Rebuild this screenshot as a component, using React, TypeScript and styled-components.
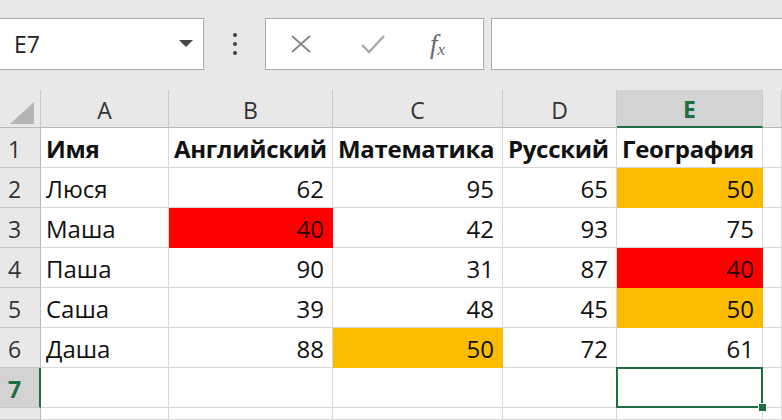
import React from "react";
import styled, { createGlobalStyle, css } from "styled-components";

const Global = createGlobalStyle`
  html, body { margin: 0; padding: 0; background: #ffffff; overflow: hidden; }
  body { font-family: "Open Sans", "Noto Sans", sans-serif; }
`;

const FONT = `"Open Sans", "Noto Sans", sans-serif`;
const GREEN = "#1e6e42";

const Page = styled.div`
  width: 782px;
  height: 420px;
  display: flex;
  flex-direction: column;
  background: #ffffff;
  overflow: hidden;
`;

const Toolbar = styled.div`
  height: 90px;
  box-sizing: border-box;
  background: #e8e8e8;
  display: flex;
  align-items: flex-start;
  padding-top: 18px;
  flex-shrink: 0;
`;

const NameBox = styled.div`
  width: 204px;
  height: 52px;
  box-sizing: border-box;
  background: #ffffff;
  border: 1px solid #aaaaaa;
  border-left: none;
  display: flex;
  align-items: center;
  justify-content: space-between;
  padding: 0 10px 0 14px;
  font-family: ${FONT};
  font-size: 23px;
  color: #222;
`;

const Dots = styled.div`
  width: 61px;
  height: 52px;
  display: flex;
  flex-direction: column;
  align-items: center;
  justify-content: center;
  gap: 5px;
  span {
    width: 4px;
    height: 4px;
    border-radius: 50%;
    background: #444;
  }
`;

const FxGroup = styled.div`
  width: 219px;
  height: 52px;
  box-sizing: border-box;
  background: #ffffff;
  border: 1px solid #aaaaaa;
  display: flex;
  align-items: center;
  padding-left: 24px;
  gap: 48px;
`;

const FxLabel = styled.span`
  font-family: "Liberation Serif", "DejaVu Serif", serif;
  font-style: italic;
  font-size: 27px;
  color: #6a6a6a;
  margin-left: -4px;
  line-height: 1;
  sub {
    font-size: 17px;
    vertical-align: -2px;
  }
`;

const FormulaInput = styled.div`
  flex: 1;
  height: 52px;
  margin-left: 7px;
  box-sizing: border-box;
  background: #ffffff;
  border: 1px solid #aaaaaa;
  border-right: none;
`;

const Sheet = styled.div`
  flex: 1;
  display: grid;
  grid-template-columns: 41px 128px 164px 170px 114px 146px 1fr;
  grid-template-rows: 38px repeat(7, 40px) 1fr;
  background: #ffffff;
`;

const Corner = styled.div`
  background: #e8e8e8;
  border-right: 1px solid #c8c8c8;
  border-bottom: 1px solid #b8b8b8;
  box-sizing: border-box;
  display: flex;
  align-items: flex-end;
  justify-content: flex-end;
  padding: 0 6px 3px 0;
`;

const ColHeader = styled.div<{ $sel?: boolean }>`
  box-sizing: border-box;
  background: ${(p) => (p.$sel ? "#d3d3d3" : "#e8e8e8")};
  border-right: 1px solid #c8c8c8;
  border-bottom: ${(p) => (p.$sel ? `2px solid ${GREEN}` : "1px solid #b8b8b8")};
  display: flex;
  align-items: center;
  justify-content: center;
  font-family: ${FONT};
  font-size: 23px;
  padding-top: 2px;
  color: ${(p) => (p.$sel ? GREEN : "#333")};
  font-weight: ${(p) => (p.$sel ? 700 : 400)};
`;

const RowHeader = styled.div<{ $sel?: boolean }>`
  box-sizing: border-box;
  background: ${(p) => (p.$sel ? "#d3d3d3" : "#e8e8e8")};
  border-right: ${(p) => (p.$sel ? `2px solid ${GREEN}` : "1px solid #b8b8b8")};
  border-bottom: 1px solid #c8c8c8;
  display: flex;
  align-items: flex-end;
  padding: 0 0 2px 8px;
  font-family: ${FONT};
  font-size: 23px;
  color: ${(p) => (p.$sel ? GREEN : "#333")};
  font-weight: ${(p) => (p.$sel ? 700 : 400)};
`;

const Cell = styled.div<{ $fill?: string; $num?: boolean; $bold?: boolean; $sel?: boolean }>`
  position: relative;
  box-sizing: border-box;
  background: ${(p) => p.$fill ?? "#ffffff"};
  border-right: 1px solid ${(p) => (p.$fill ? p.$fill : "#d8d8d8")};
  border-bottom: 1px solid ${(p) => (p.$fill ? p.$fill : "#d8d8d8")};
  display: flex;
  align-items: flex-end;
  justify-content: ${(p) => (p.$num ? "flex-end" : "flex-start")};
  padding: 0 ${(p) => (p.$num ? "8px" : "2px")} 2px 5px;
  font-family: ${FONT};
  font-size: 24px;
  font-weight: ${(p) => (p.$bold ? 700 : 400)};
  letter-spacing: ${(p) => (p.$bold ? "-0.3px" : "0")};
  color: ${(p) => (p.$fill === "#ff0000" ? "#2a0000" : "#111")};
  white-space: nowrap;
  overflow: visible;
  ${(p) =>
    p.$sel &&
    css`
      &::after {
        content: "";
        position: absolute;
        left: -1px;
        top: -1px;
        right: -1px;
        bottom: -1px;
        border: 2px solid ${GREEN};
        pointer-events: none;
      }
      &::before {
        content: "";
        position: absolute;
        right: -5px;
        bottom: -5px;
        width: 7px;
        height: 7px;
        background: ${GREEN};
        border: 1px solid #ffffff;
        z-index: 2;
      }
    `}
`;

type C = { v: string; fill?: string };

const ORANGE = "#fbbc00";
const RED = "#ff0000";

const headers = ["Имя", "Английский", "Математика", "Русский", "География"];
const rows: C[][] = [
  [{ v: "Люся" }, { v: "62" }, { v: "95" }, { v: "65" }, { v: "50", fill: ORANGE }],
  [{ v: "Маша" }, { v: "40", fill: RED }, { v: "42" }, { v: "93" }, { v: "75" }],
  [{ v: "Паша" }, { v: "90" }, { v: "31" }, { v: "87" }, { v: "40", fill: RED }],
  [{ v: "Саша" }, { v: "39" }, { v: "48" }, { v: "45" }, { v: "50", fill: ORANGE }],
  [{ v: "Даша" }, { v: "88" }, { v: "50", fill: ORANGE }, { v: "72" }, { v: "61" }],
];

export default function App() {
  return (
    <Page>
      <Global />
      <Toolbar>
        <NameBox>
          <span>E7</span>
          <svg width="14" height="8" viewBox="0 0 14 8">
            <path d="M0 0 L14 0 L7 7 Z" fill="#444" />
          </svg>
        </NameBox>
        <Dots>
          <span />
          <span />
          <span />
        </Dots>
        <FxGroup>
          <svg width="22" height="18" viewBox="0 0 22 18">
            <path d="M2 1 L20 17 M20 1 L2 17" stroke="#8a8a8a" strokeWidth="2" fill="none" />
          </svg>
          <svg width="26" height="20" viewBox="0 0 26 20">
            <path d="M2 11 L9 18 L24 2" stroke="#a8a8a8" strokeWidth="2.4" fill="none" />
          </svg>
          <FxLabel>
            f<sub>x</sub>
          </FxLabel>
        </FxGroup>
        <FormulaInput />
      </Toolbar>
      <Sheet>
        <Corner>
          <svg width="24" height="22" viewBox="0 0 24 22">
            <path d="M24 0 L24 22 L0 22 Z" fill="#b4b4b4" />
          </svg>
        </Corner>
        {["A", "B", "C", "D", "E"].map((l) => (
          <ColHeader key={l} $sel={l === "E"}>
            {l}
          </ColHeader>
        ))}
        <ColHeader />
        <RowHeader>1</RowHeader>
        {headers.map((h) => (
          <Cell key={h} $bold>
            {h}
          </Cell>
        ))}
        <Cell />
        {rows.map((r, i) => (
          <React.Fragment key={i}>
            <RowHeader>{i + 2}</RowHeader>
            {r.map((c, j) => (
              <Cell key={j} $num={j > 0} $fill={c.fill}>
                {c.v}
              </Cell>
            ))}
            <Cell />
          </React.Fragment>
        ))}
        <RowHeader $sel>7</RowHeader>
        <Cell />
        <Cell />
        <Cell />
        <Cell />
        <Cell $sel />
        <Cell />
        <RowHeader />
        <Cell />
        <Cell />
        <Cell />
        <Cell />
        <Cell />
        <Cell />
      </Sheet>
    </Page>
  );
}
